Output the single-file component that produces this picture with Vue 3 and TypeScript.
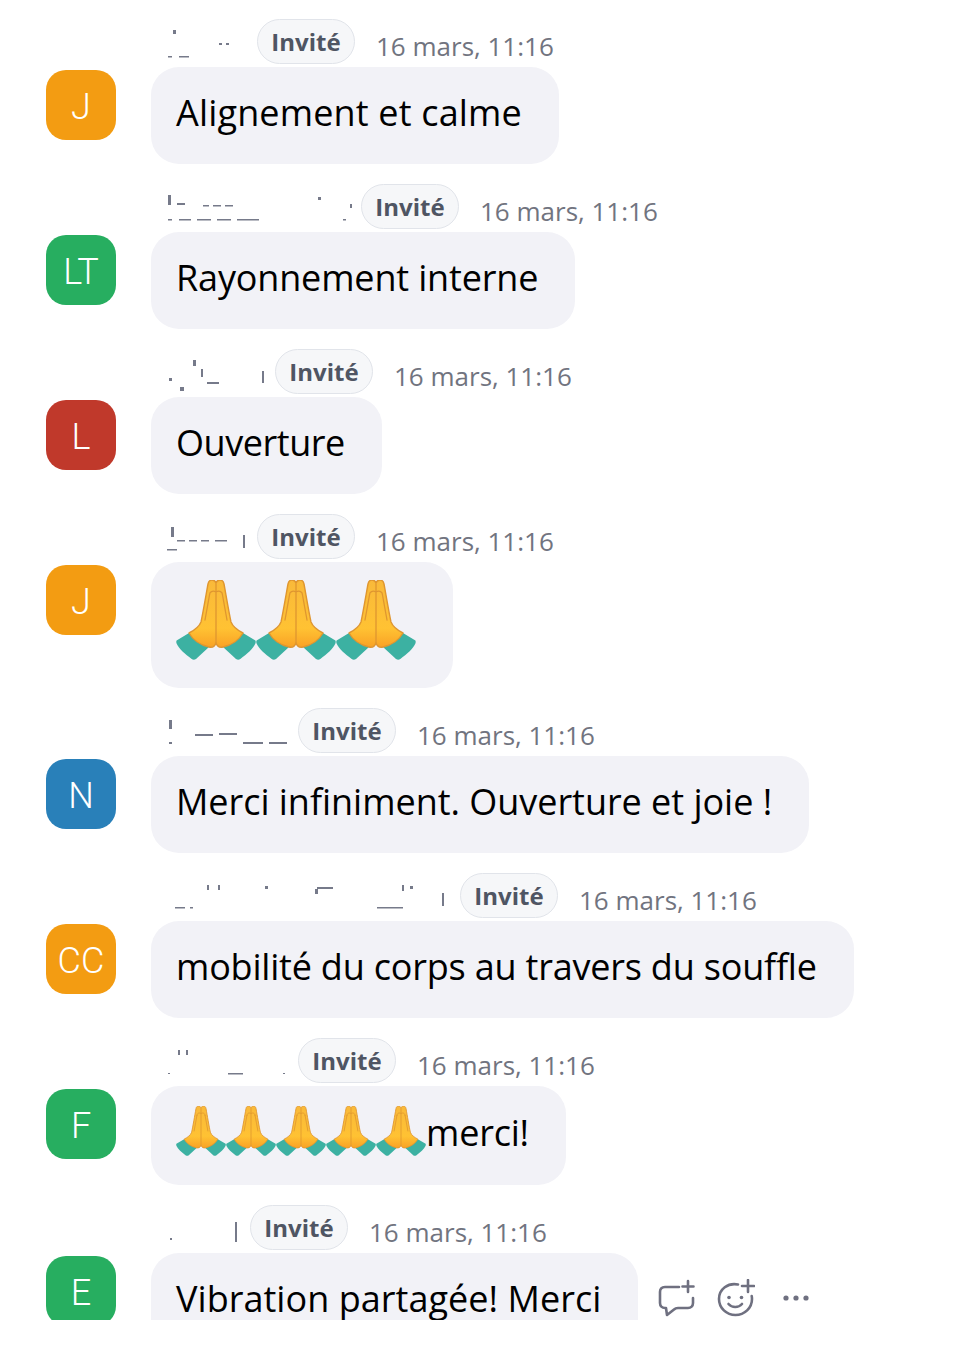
<script setup lang="ts">
type Speck = [number, number, number, number]
interface Msg {
  initials: string
  color: string
  nameWidth: number
  specks: Speck[]
  text?: string
  track?: number
  hands?: number
  handSize?: number
  tall?: number
  actions?: boolean
}
const messages: Msg[] = [
  { initials: 'J', color: '#f39c12', nameWidth: 106, text: 'Alignement et calme', track: 0.16,
    specks: [[22, 11, 3, 4], [17, 37, 4, 1.5], [28, 37, 10, 1.5], [68, 24, 3, 2], [75, 24, 3, 2]] },
  { initials: 'LT', color: '#27ae60', nameWidth: 210, text: 'Rayonnement interne', track: -0.16,
    specks: [[17, 11, 3, 10], [26, 19, 8, 2], [52, 21, 6, 1.5], [62, 21, 8, 1.5], [74, 21, 8, 1.5], [17, 35, 4, 1.5], [28, 35, 12, 1.5], [46, 35, 14, 1.5], [66, 35, 14, 1.5], [86, 35, 22, 1.5], [167, 13, 3, 3], [199, 20, 2, 4], [192, 35, 3, 1.5]] },
  { initials: 'L', color: '#c0392b', nameWidth: 124, text: 'Ouverture', track: -0.44,
    specks: [[18, 29, 3, 3], [29, 38, 4, 4], [42, 11, 3, 6], [50, 20, 2, 8], [56, 33, 12, 2], [111, 22, 2, 12]] },
  { initials: 'J', color: '#f39c12', nameWidth: 106, hands: 3, handSize: 80, tall: 126,
    specks: [[20, 13, 3, 10], [26, 26, 8, 1.5], [38, 26, 8, 1.5], [50, 26, 8, 1.5], [64, 26, 12, 1.5], [16, 35, 10, 1.5], [92, 21, 2, 13]] },
  { initials: 'N', color: '#2980b9', nameWidth: 147, text: 'Merci infiniment. Ouverture et joie !', track: -0.03,
    specks: [[18, 12, 3, 9], [18, 34, 3, 2], [44, 26, 18, 2], [68, 25, 18, 2], [92, 34, 20, 2], [118, 34, 18, 2]] },
  { initials: 'CC', color: '#f39c12', nameWidth: 309, text: 'mobilité du corps au travers du souffle', track: -0.2,
    specks: [[56, 12, 2, 5], [67, 12, 2, 5], [114, 13, 3, 3], [166, 14, 16, 2], [164, 16, 3, 5], [251, 12, 2, 6], [259, 13, 3, 3], [24, 34, 10, 1.5], [39, 34, 3, 1.5], [226, 34, 26, 1.5], [291, 20, 2, 13]] },
  { initials: 'F', color: '#27ae60', nameWidth: 147, hands: 5, handSize: 50, text: 'merci!', track: -0.2, tall: 99,
    specks: [[27, 12, 2, 5], [35, 12, 2, 5], [17, 35, 2, 1], [77, 35, 15, 1.5], [132, 35, 2, 1]] },
  { initials: 'E', color: '#27ae60', nameWidth: 99, text: 'Vibration partagée! Merci', track: 0.04, actions: true,
    specks: [[19, 33, 2, 2], [84, 17, 2, 20]] }
]
</script>

<template>
  <main class="chat">
    <article v-for="(m, i) in messages" :key="i" class="row">
      <div class="avatar" :style="{ background: m.color }">{{ m.initials }}</div>
      <div class="content">
        <header class="meta">
          <svg class="name" :style="{ width: m.nameWidth + 'px' }" :viewBox="`0 0 ${m.nameWidth} 45`" aria-hidden="true">
            <rect v-for="(s, k) in m.specks" :key="k" :x="s[0]" :y="s[1]" :width="s[2]" :height="s[3]" fill="#767a8a" />
          </svg>
          <span class="badge">Invité</span>
          <time class="time">16 mars, 11:16</time>
        </header>
        <div class="body">
          <div class="bubble" :style="m.tall ? { height: m.tall + 'px' } : undefined">
            <svg v-for="h in m.hands || 0" :key="h" class="hand" :width="m.handSize" :height="m.handSize" viewBox="0 0 80 80" aria-hidden="true">
              <defs>
                <linearGradient id="skin" x1="0" y1="0" x2="0" y2="1">
                  <stop offset="0" stop-color="#f9b93a" />
                  <stop offset="0.72" stop-color="#ffc233" />
                  <stop offset="1" stop-color="#f9a225" />
                </linearGradient>
              </defs>
              <path d="M0.6 60.5 13 53 33 67 20 79c-1.4 1-3 1-4.300 0C9 74 3 69 0.600 63.500c-.4-1-.4-2.300 0-3z" fill="#3cb1a2" />
              <path d="M79.400 60.500 67 53 47 67l13 12c1.400 1 3 1 4.300 0 6.700-5 12.700-10 15.100-15.500.4-1 .4-2.300 0-3z" fill="#3cb1a2" />
              <path d="M13 53c6-3 10-6 12-11 2-9 5-27 7-38 .5-2.500 2-4 4-4s3.500 1.500 4 3c.5-1.500 2-3 4-3s3.500 1.500 4 4c2 11 5 29 7 38 2 5 6 8 12 11-4 7-11 12-20 14-3 .6-6-.8-7-4-1 3.200-4 4.600-7 4-9-2-16-7-20-14z" fill="url(#skin)" stroke="#df9630" stroke-width="1.400" stroke-linejoin="round" />
              <path d="M40 4v59M33.500 15c0-3 3-5 6.500-3 3.500-2 6.500 0 6.500 3M33.500 15 29 40M46.500 15 51 40" fill="none" stroke="#df9630" stroke-width="1.300" stroke-linecap="round" />
            </svg>
            <span v-if="m.text" class="text" :style="{ letterSpacing: (m.track || 0) + 'px' }">{{ m.text }}</span>
          </div>
          <div v-if="m.actions" class="actions">
            <svg width="38" height="38" viewBox="0 0 38 38" fill="none" stroke="#6f7080" stroke-width="2.600" stroke-linecap="round" stroke-linejoin="round" aria-hidden="true">
              <path d="M22 8H8C4.500 8 3 10 3 13v11c0 3 2 5 5 5h1l1 7 7-5.500c1-1 2-1.500 4-1.500h10c3 0 5-2 5-5v-5" />
              <path d="M31 2v11M25.500 7.500h11" />
            </svg>
            <svg width="38" height="38" viewBox="0 0 38 38" fill="none" stroke="#6f7080" stroke-width="2.600" stroke-linecap="round" aria-hidden="true">
              <path d="M21 5.500C11 3.500 2 10 2 20c0 9 7.500 16 16.500 16S35 29 35 20c0-1-.1-2-.3-3" />
              <path d="M31 1v12M25 7h12" />
              <path d="M11.500 25c3.500 4 10 4 13.500 0" />
              <circle cx="12" cy="18.500" r="1.800" fill="#6f7080" stroke="none" />
              <circle cx="24.500" cy="18.500" r="1.800" fill="#6f7080" stroke="none" />
            </svg>
            <svg class="more" width="28" height="8" viewBox="0 0 28 8" fill="#6f7080" aria-hidden="true">
              <circle cx="4" cy="4" r="2.600" /><circle cx="14" cy="4" r="2.600" /><circle cx="24" cy="4" r="2.600" />
            </svg>
          </div>
        </div>
      </div>
    </article>
  </main>
</template>

<style scoped>
.chat {
  height: 1320px;
  overflow: hidden;
  box-sizing: border-box;
  padding: 19px 0 0 46px;
  font-family: "Open Sans", "Noto Sans", "Liberation Sans", sans-serif;
}
.row {
  display: flex;
  gap: 35px;
  margin-bottom: 20px;
}
.avatar {
  flex: none;
  box-sizing: border-box;
  width: 70px;
  height: 70px;
  margin-top: 51px;
  padding-top: 4px;
  border-radius: 20px;
  display: flex;
  align-items: center;
  justify-content: center;
  color: #fff;
  font-family: Roboto, "Open Sans", sans-serif;
  font-size: 36px;
  font-weight: 300;
}
.content {
  min-width: 0;
}
.meta {
  display: flex;
  height: 48px;
}
.name {
  flex: none;
  height: 45px;
}
.badge {
  box-sizing: border-box;
  height: 45px;
  width: 98px;
  border: 1px solid #e1e4ea;
  border-radius: 23px;
  background: #f6f7f9;
  color: #4f5563;
  font-size: 24px;
  font-weight: 700;
  line-height: 43px;
  text-align: center;
}
.time {
  margin-left: 21px;
  color: #71747f;
  font-size: 26px;
  line-height: 54px;
  white-space: nowrap;
}
.body {
  display: flex;
  align-items: center;
  gap: 19px;
}
.bubble {
  display: flex;
  align-items: center;
  box-sizing: border-box;
  height: 97px;
  padding: 0 37px 0 25px;
  border-radius: 28px;
  background: #f2f2f7;
  white-space: nowrap;
}
.hand {
  flex: none;
  margin-bottom: 10px;
}
.text {
  margin-bottom: 6px;
  color: #000;
  font-size: 36px;
  line-height: 48px;
}
.actions {
  display: flex;
  align-items: center;
  gap: 22px;
  margin-bottom: 8px;
}
.more {
  margin-left: 5px;
}
</style>
